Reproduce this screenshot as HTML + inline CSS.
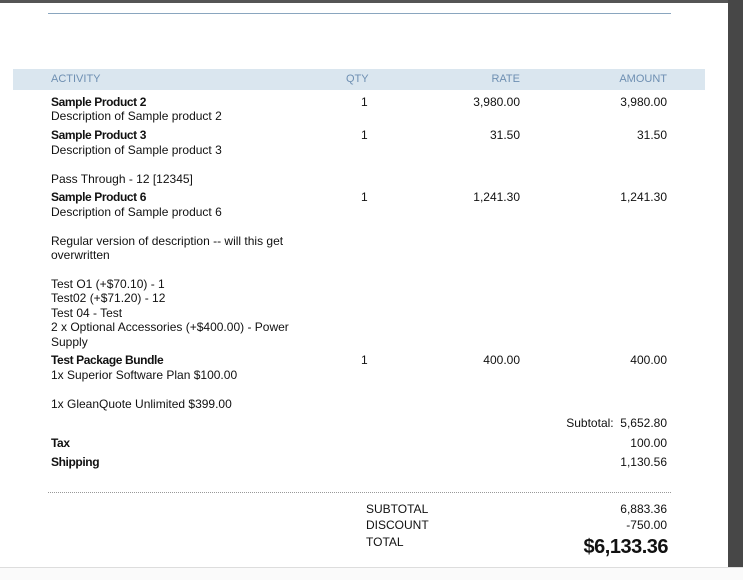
<!DOCTYPE html>
<html><head><style>
body{margin:0;width:743px;height:580px;background:#fff;position:relative;overflow:hidden;font-family:"Liberation Sans",Arial,sans-serif;font-size:12px;color:#111;}
.a{position:absolute;white-space:nowrap;line-height:14px;}
.r{text-align:right;}
b{font-weight:bold;letter-spacing:-0.4px;}
</style></head><body>
<div style="position:absolute;left:0;top:0;width:743px;height:3px;background:#555"></div>
<div style="position:absolute;left:728px;top:0;width:15px;height:567px;background:#474747"></div>
<div style="position:absolute;left:0;top:567px;width:743px;height:1px;background:#ddd"></div>
<div style="position:absolute;left:0;top:568px;width:743px;height:12px;background:#fafafa"></div>
<div style="position:absolute;left:48px;top:13px;width:623px;height:1px;background:#8aa6bf"></div>
<div style="position:absolute;left:13px;top:69px;width:692px;height:21px;background:#dae6ef"></div>
<div class="a" style="left:51px;top:72px;color:#6e8fb2;font-size:11px">ACTIVITY</div>
<div class="a" style="left:346px;top:72px;color:#6e8fb2;font-size:11px">QTY</div>
<div class="a r" style="left:420px;width:100px;top:72px;color:#6e8fb2;font-size:11px">RATE</div>
<div class="a r" style="left:567px;width:100px;top:72px;color:#6e8fb2;font-size:11px">AMOUNT</div>

<div class="a" style="left:51px;top:95px"><b>Sample Product 2</b></div>
<div class="a" style="left:51px;top:109px">Description of Sample product 2</div>
<div class="a" style="left:361px;top:95px">1</div>
<div class="a r" style="left:420px;width:100px;top:95px">3,980.00</div>
<div class="a r" style="left:567px;width:100px;top:95px">3,980.00</div>

<div class="a" style="left:51px;top:128px"><b>Sample Product 3</b></div>
<div class="a" style="left:51px;top:143px">Description of Sample product 3</div>
<div class="a" style="left:361px;top:128px">1</div>
<div class="a r" style="left:420px;width:100px;top:128px">31.50</div>
<div class="a r" style="left:567px;width:100px;top:128px">31.50</div>

<div class="a" style="left:51px;top:172px">Pass Through - 12 [12345]</div>
<div class="a" style="left:51px;top:190px"><b>Sample Product 6</b></div>
<div class="a" style="left:51px;top:205px">Description of Sample product 6</div>
<div class="a" style="left:361px;top:190px">1</div>
<div class="a r" style="left:420px;width:100px;top:190px">1,241.30</div>
<div class="a r" style="left:567px;width:100px;top:190px">1,241.30</div>

<div class="a" style="left:51px;top:234px">Regular version of description -- will this get</div>
<div class="a" style="left:51px;top:248px">overwritten</div>

<div class="a" style="left:51px;top:277px">Test O1 (+$70.10) - 1</div>
<div class="a" style="left:51px;top:291px">Test02 (+$71.20) - 12</div>
<div class="a" style="left:51px;top:306px">Test 04 - Test</div>
<div class="a" style="left:51px;top:320px">2 x Optional Accessories (+$400.00) - Power</div>
<div class="a" style="left:51px;top:335px">Supply</div>
<div class="a" style="left:51px;top:353px"><b>Test Package Bundle</b></div>
<div class="a" style="left:51px;top:368px">1x Superior Software Plan $100.00</div>
<div class="a" style="left:361px;top:353px">1</div>
<div class="a r" style="left:420px;width:100px;top:353px">400.00</div>
<div class="a r" style="left:567px;width:100px;top:353px">400.00</div>

<div class="a" style="left:51px;top:397px">1x GleanQuote Unlimited $399.00</div>
<div class="a r" style="left:467px;width:200px;top:416px">Subtotal:&nbsp; 5,652.80</div>
<div class="a" style="left:51px;top:436px"><b>Tax</b></div>
<div class="a r" style="left:567px;width:100px;top:436px">100.00</div>
<div class="a" style="left:51px;top:455px"><b>Shipping</b></div>
<div class="a r" style="left:567px;width:100px;top:455px">1,130.56</div>

<div style="position:absolute;left:48px;top:492px;width:623px;border-top:1px dotted #999"></div>
<div class="a" style="left:366px;top:502px">SUBTOTAL</div>
<div class="a r" style="left:567px;width:100px;top:502px">6,883.36</div>
<div class="a" style="left:366px;top:518px">DISCOUNT</div>
<div class="a r" style="left:567px;width:100px;top:518px">-750.00</div>
<div class="a" style="left:366px;top:535px">TOTAL</div>
<div class="a r" style="left:467px;width:201px;top:535px;font-size:20px;line-height:24px;font-weight:bold;letter-spacing:-0.5px">$6,133.36</div>
</body></html>
